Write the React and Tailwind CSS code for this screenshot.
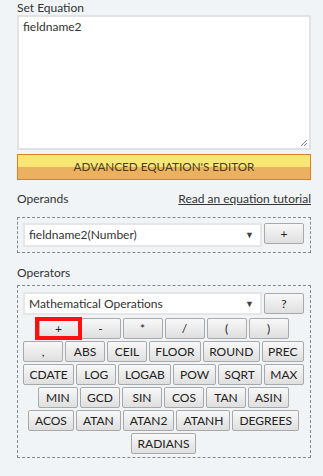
import React from "react";

const rows = [
  ["+", "-", "*", "/", "(", ")"],
  [",", "ABS", "CEIL", "FLOOR", "ROUND", "PREC"],
  ["CDATE", "LOG", "LOGAB", "POW", "SQRT", "MAX"],
  ["MIN", "GCD", "SIN", "COS", "TAN", "ASIN"],
  ["ACOS", "ATAN", "ATAN2", "ATANH", "DEGREES"],
  ["RADIANS"],
];

function Btn({ children, className = "" }) {
  return (
    <div
      className={
        "h-[21px] min-w-[40px] px-[6px] flex items-center justify-center border border-[#a9a9a9] rounded-[2px] bg-gradient-to-b from-[#f8f8f8] to-[#dfdfdf] text-[#222] text-[12px] leading-none " +
        className
      }
    >
      {children}
    </div>
  );
}

function Select({ text, h }) {
  return (
    <div
      className={
        "flex-1 flex items-center justify-between bg-white border-2 border-[#e6e6e6] pl-[4px] pr-[6px] text-[12px] text-[#333] " +
        h
      }
    >
      <span>{text}</span>
      <span className="text-[9px] text-[#444]">▼</span>
    </div>
  );
}

export default function App() {
  return (
    <div
      className="min-h-[476px] bg-[#f1f4f7] text-[#333]"
      style={{ fontFamily: "Lato, 'Liberation Sans', sans-serif" }}
    >
      <div className="ml-[17px] w-[294px] flex flex-col">
        <div className="h-[15px] text-[12px] leading-[15px]">Set Equation</div>
        <div className="relative h-[135px] bg-white border-2 border-[#e2e2e2] px-[4px] pt-[1px] text-[12px]">
          fieldname2
          <svg className="absolute right-[1px] bottom-[1px]" width="9" height="9" viewBox="0 0 9 9">
            <path d="M8 2L2 8M8 5L5 8" stroke="#888" strokeWidth="1" />
          </svg>
        </div>
        <div className="mt-[4px] h-[26px] border border-[#e07d1f] bg-[linear-gradient(#f8e775_0%,#f8e775_48%,#ebb160_48%,#ebb160_100%)] flex items-center justify-center text-[11.7px] text-[#4a3c1e]">
          ADVANCED EQUATION'S EDITOR
        </div>
        <div className="mt-[11px] h-[16px] flex items-end justify-between text-[12px] leading-[16px]">
          <span>Operands</span>
          <span className="underline">Read an equation tutorial</span>
        </div>
        <div className="mt-[10px] h-[36px] border border-dashed border-[#888] pl-[5px] pr-[6px] pt-[5px] flex items-start gap-[2px]">
          <Select text="fieldname2(Number)" h="h-[24px]" />
          <Btn className="w-[40px] h-[20px]">+</Btn>
        </div>
        <div className="mt-[12px] h-[16px] text-[12px] leading-[16px]">Operators</div>
        <div className="mt-[4px] h-[173px] border border-dashed border-[#888] pl-[5px] pr-[6px] pt-[6px] flex flex-col">
          <div className="flex items-start gap-[2px]">
            <Select text="Mathematical Operations" h="h-[23px]" />
            <Btn className="w-[40px] h-[20px] mt-[1px]">?</Btn>
          </div>
          <div className="mt-[3px] flex flex-col gap-[2px]">
            {rows.map((row, i) => (
              <div key={i} className="flex justify-center gap-[2px]">
                {row.map((b, j) =>
                  i === 0 && j === 0 ? (
                    <div key={b} className="relative">
                      <Btn>{b}</Btn>
                      <div className="absolute left-[-4px] top-[-1px] w-[47px] h-[23px] border-4 border-[#ff1010]" />
                    </div>
                  ) : (
                    <Btn key={b}>{b}</Btn>
                  )
                )}
              </div>
            ))}
          </div>
        </div>
      </div>
    </div>
  );
}
